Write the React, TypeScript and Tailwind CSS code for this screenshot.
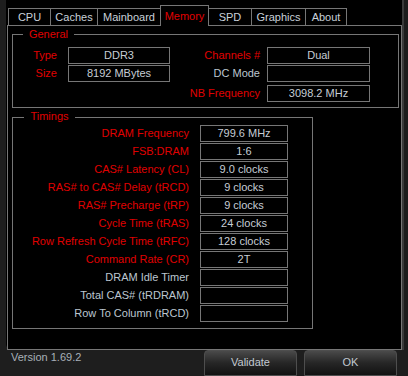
import React from "react";

const tabs = ["CPU", "Caches", "Mainboard", "Memory", "SPD", "Graphics", "About"];
const tabWidths = [42, 47, 63, 49, 42, 54, 42];

const timings: { label: string; value: string; red: boolean }[] = [
  { label: "DRAM Frequency", value: "799.6 MHz", red: true },
  { label: "FSB:DRAM", value: "1:6", red: true },
  { label: "CAS# Latency (CL)", value: "9.0 clocks", red: true },
  { label: "RAS# to CAS# Delay (tRCD)", value: "9 clocks", red: true },
  { label: "RAS# Precharge (tRP)", value: "9 clocks", red: true },
  { label: "Cycle Time (tRAS)", value: "24 clocks", red: true },
  { label: "Row Refresh Cycle Time (tRFC)", value: "128 clocks", red: true },
  { label: "Command Rate (CR)", value: "2T", red: true },
  { label: "DRAM Idle Timer", value: "", red: false },
  { label: "Total CAS# (tRDRAM)", value: "", red: false },
  { label: "Row To Column (tRCD)", value: "", red: false },
];

function Box({ value, w }: { value: string; w: string }) {
  return (
    <div
      className={`${w} h-[17px] border border-[#767676] flex items-center justify-center text-[#c6cdd5] leading-[13px]`}
    >
      {value}
    </div>
  );
}

function Label({ text, red, w }: { text: string; red: boolean; w: string }) {
  return (
    <div
      className={`${w} text-right leading-[13px] whitespace-nowrap ${
        red ? "text-[#e00000]" : "text-[#bcc6d0]"
      }`}
    >
      {text}
    </div>
  );
}

export default function App() {
  return (
    <div className="w-[408px] h-[376px] bg-[#1e1e1e] flex flex-col overflow-hidden font-['Liberation_Sans',Arial,sans-serif] text-[11px]">
      <div className="flex h-[352px]">
        <div className="w-[6px]" />

        {/* black main panel */}
        <div className="w-[396px] bg-black rounded-bl-[6px] pl-px">
          {/* tabs */}
          <div className="flex items-end h-[25px] pl-px">
            {tabs.map((t, i) => {
              const active = t === "Memory";
              const afterActive = tabs[i - 1] === "Memory";
              return (
                <div
                  key={t}
                  style={{ width: tabWidths[i] }}
                  className={`flex items-center justify-center leading-[13px] border-t border-[#767676] ${
                    afterActive ? "" : "border-l"
                  } ${i === tabs.length - 1 || active ? "border-r" : ""} ${
                    active
                      ? "h-[21px] -mb-px relative z-10 bg-black text-[#e00000]"
                      : "h-[17px] text-[#c9d1da]"
                  }`}
                >
                  {t}
                </div>
              );
            })}
          </div>

          {/* tab frame */}
          <div className="w-[395px] h-[325px] border border-[#767676] pl-[4px] pt-[8px]">
            {/* General */}
            <div className="relative w-[387px] h-[74px] border border-[#767676] pt-[12px]">
              <span className="absolute -top-[7px] left-[10px] w-[51px] bg-black text-center text-[#e00000] leading-[13px]">
                General
              </span>
              <div className="flex items-center h-[17px]">
                <Label text="Type" red w="w-[44px]" />
                <div className="ml-[11px]">
                  <Box value="DDR3" w="w-[102px]" />
                </div>
                <Label text="Channels #" red w="w-[90px]" />
                <div className="ml-[7px]">
                  <Box value="Dual" w="w-[103px]" />
                </div>
              </div>
              <div className="flex items-center h-[17px] mt-px">
                <Label text="Size" red w="w-[44px]" />
                <div className="ml-[11px]">
                  <Box value="8192 MBytes" w="w-[102px]" />
                </div>
                <Label text="DC Mode" red={false} w="w-[90px]" />
                <div className="ml-[7px]">
                  <Box value="" w="w-[103px]" />
                </div>
              </div>
              <div className="flex items-center h-[17px] mt-[3px] pl-[157px]">
                <Label text="NB Frequency" red w="w-[90px]" />
                <div className="ml-[7px]">
                  <Box value="3098.2 MHz" w="w-[103px]" />
                </div>
              </div>
            </div>

            {/* Timings */}
            <div className="relative mt-[9px] w-[301px] h-[212px] border border-[#767676] pt-[7px] flex flex-col gap-px">
              <span className="absolute -top-[8px] left-[11px] w-[51px] bg-black text-center text-[#e00000] leading-[13px]">
                Timings
              </span>
              {timings.map((r) => (
                <div key={r.label} className="flex items-center h-[17px]">
                  <Label text={r.label} red={r.red} w="w-[176px]" />
                  <div className="ml-[11px]">
                    <Box value={r.value} w="w-[88px]" />
                  </div>
                </div>
              ))}
            </div>
          </div>
        </div>

        <div className="flex-1 border-l-2 border-[#3a3a3a] bg-[#1c1c1c]" />
      </div>

      {/* bottom bar */}
      <div className="flex-1 flex items-start">
        <span className="ml-[11px] mt-px leading-[13px] text-[#a8b0b8]">Version 1.69.2</span>
        <div className="ml-auto mr-[11px] flex gap-[7px]">
          <button className="w-[93px] h-[26px] rounded-t-[4px] border border-[#4e4e4e] bg-gradient-to-b from-[#4a4a4a] via-[#262626] to-[#121212] text-[#c2c9d1] leading-[13px] pb-[2px]">
            Validate
          </button>
          <button className="w-[93px] h-[26px] rounded-t-[4px] border border-[#4e4e4e] bg-gradient-to-b from-[#4a4a4a] via-[#262626] to-[#121212] text-[#c2c9d1] leading-[13px] pb-[2px]">
            OK
          </button>
        </div>
      </div>
    </div>
  );
}
